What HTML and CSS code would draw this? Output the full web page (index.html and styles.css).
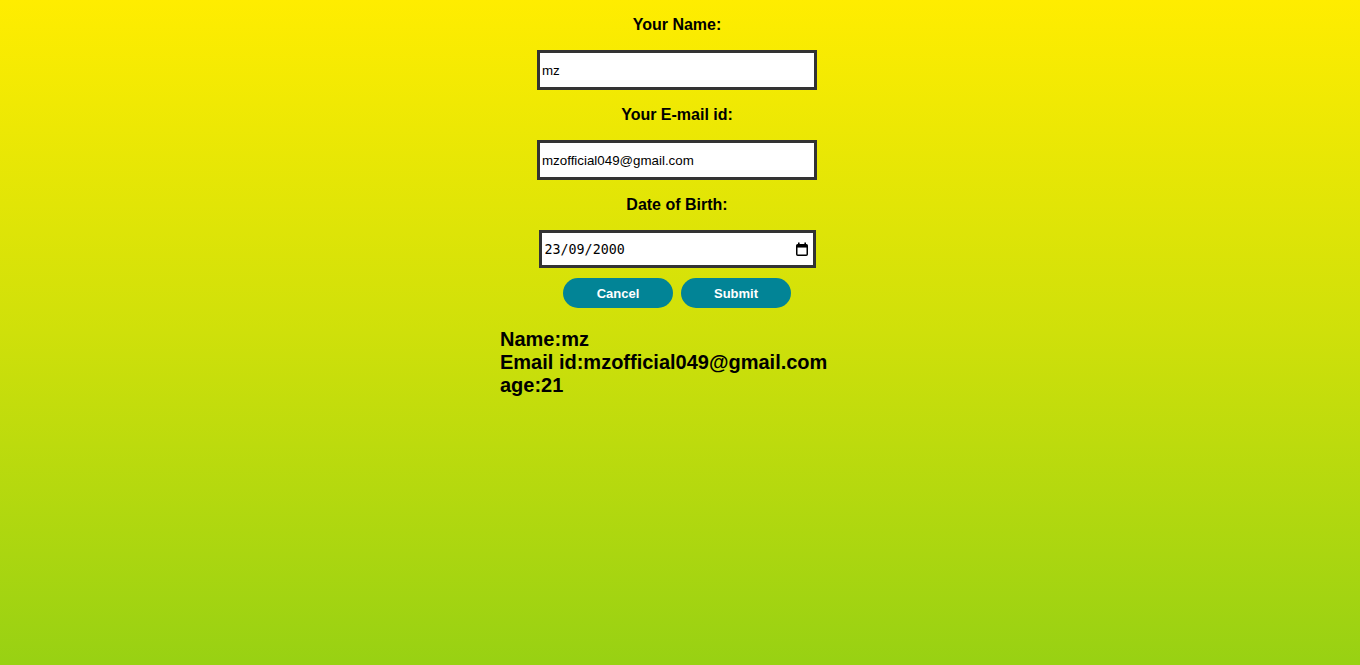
FILE: index.html
```html
<!DOCTYPE html>
<html>
<head>
<meta charset="utf-8">
<link rel="stylesheet" href="styles.css">
</head>
<body>
<div class="page">
  <form class="form">
    <label class="label" for="name">Your Name:</label>
    <input class="field" id="name" type="text" value="mz">
    <label class="label" for="email">Your E-mail id:</label>
    <input class="field" id="email" type="email" value="mzofficial049@gmail.com">
    <label class="label" for="dob">Date of Birth:</label>
    <div class="date-field">
      <input class="date-text" id="dob" type="text" value="23/09/2000">
      <svg class="cal" width="14" height="15" viewBox="0 0 14 15" aria-hidden="true">
        <rect x="3" y="0.5" width="1.6" height="3" fill="#000"/>
        <rect x="9.4" y="0.5" width="1.6" height="3" fill="#000"/>
        <rect x="1.75" y="2.75" width="10.5" height="10.5" rx="1" fill="none" stroke="#000" stroke-width="1.5"/>
        <rect x="1.75" y="2.75" width="10.5" height="2.8" fill="#000"/>
      </svg>
    </div>
    <div class="buttons">
      <button type="button" class="btn">Cancel</button>
      <button type="button" class="btn">Submit</button>
    </div>
  </form>
  <div class="result">
    <div>Name:mz</div>
    <div>Email id:mzofficial049@gmail.com</div>
    <div>age:21</div>
  </div>
</div>
</body>
</html>
```

FILE: styles.css
```css
html, body {
  margin: 0;
  height: 100%;
}
body {
  background: linear-gradient(180deg, #ffed00 0%, #cfe00a 50%, #98d113 100%);
  font-family: "Liberation Sans", Arial, sans-serif;
  color: #000;
}
.page {
  width: 360px;
  margin: 0 auto;
}
.form {
  display: flex;
  flex-direction: column;
  align-items: center;
  padding-right: 6px;
  padding-top: 16px;
}
.label {
  font-size: 16px;
  font-weight: bold;
  line-height: 18px;
  margin-bottom: 16px;
}
.label + .field,
.label + .date-field {
  margin-top: 0;
}
.field {
  box-sizing: border-box;
  width: 280px;
  height: 40px;
  border: 3px solid #333;
  padding: 1px 2px;
  margin: 0 0 16px 0;
  font-family: "Liberation Sans", Arial, sans-serif;
  font-size: 13.33px;
  background: #fff;
  outline: none;
}
.date-field {
  box-sizing: border-box;
  width: 277px;
  height: 38px;
  margin-bottom: 10px;
  border: 3px solid #333;
  background: #fff;
  display: flex;
  align-items: center;
  padding: 1px 4px 0 1px;
}
.date-text {
  flex: 1;
  min-width: 0;
  border: none;
  outline: none;
  padding: 0 2px;
  font-family: "DejaVu Sans Mono", monospace;
  font-size: 13.33px;
  background: transparent;
  color: #000;
}
.cal {
  flex: none;
}
.buttons {
  display: flex;
  gap: 8px;
}
.btn {
  width: 110px;
  height: 30px;
  border: none;
  border-radius: 15px;
  background: #028496;
  color: #fff;
  font-family: "Liberation Sans", Arial, sans-serif;
  font-weight: bold;
  font-size: 13px;
}
.result {
  margin-top: 20px;
  font-size: 20px;
  font-weight: bold;
  line-height: 23px;
}
```
